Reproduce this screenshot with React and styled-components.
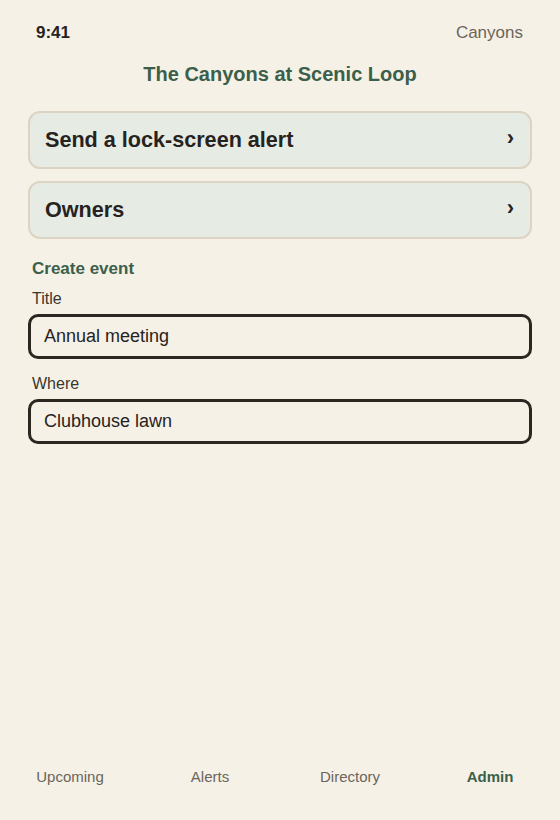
import React from "react";
import styled, { createGlobalStyle } from "styled-components";

const GlobalStyle = createGlobalStyle`
  html, body {
    margin: 0;
    padding: 0;
    background: #f6f1e6;
  }
  * {
    box-sizing: border-box;
  }
`;

const App = () => {
  return (
    <Screen>
      <GlobalStyle />
      <StatusBar>
        <Time>9:41</Time>
        <Carrier>Canyons</Carrier>
      </StatusBar>
      <Heading>The Canyons at Scenic Loop</Heading>

      <Content>
        <LinkCard type="button">
          <span>Send a lock-screen alert</span>
          <Chevron>›</Chevron>
        </LinkCard>
        <LinkCard type="button">
          <span>Owners</span>
          <Chevron>›</Chevron>
        </LinkCard>

        <Form>
          <SectionTitle>Create event</SectionTitle>
          <Field>
            <Label htmlFor="title">Title</Label>
            <Input id="title" defaultValue="Annual meeting" />
          </Field>
          <Field>
            <Label htmlFor="where">Where</Label>
            <Input id="where" defaultValue="Clubhouse lawn" />
          </Field>
        </Form>
      </Content>

      <TabBar>
        <Tab>Upcoming</Tab>
        <Tab>Alerts</Tab>
        <Tab>Directory</Tab>
        <Tab active>Admin</Tab>
      </TabBar>
    </Screen>
  );
};

const Screen = styled.div`
  min-height: 820px;
  display: flex;
  flex-direction: column;
  background: #f6f1e6;
  font-family: "Liberation Sans", Arial, sans-serif;
  color: #26231f;
`;

const StatusBar = styled.div`
  display: flex;
  justify-content: space-between;
  align-items: center;
  padding: 22px 37px 0 36px;
  height: 44px;
  line-height: 22px;
`;

const Time = styled.span`
  font-size: 17px;
  font-weight: 700;
  color: #26231f;
`;

const Carrier = styled.span`
  font-size: 17px;
  color: #6b655b;
`;

const Heading = styled.h1`
  margin: 17px 0 0;
  text-align: center;
  font-size: 20px;
  line-height: 26px;
  font-weight: 700;
  color: #3b5f4b;
`;

const Content = styled.main`
  flex: 1;
  display: flex;
  flex-direction: column;
  gap: 12px;
  padding: 24px 28px 0;
`;

const LinkCard = styled.button`
  display: flex;
  justify-content: space-between;
  align-items: center;
  width: 100%;
  height: 58px;
  padding: 0 16px 0 15px;
  background: #e6ebe4;
  border: 2px solid #dcd3c2;
  border-radius: 12px;
  font-family: inherit;
  font-size: 21.6px;
  font-weight: 700;
  color: #26231f;
  text-align: left;
  cursor: pointer;
`;

const Chevron = styled.span`
  font-size: 22px;
  font-weight: 700;
  line-height: 1;
  margin-top: -5px;
`;

const Form = styled.section`
  display: flex;
  flex-direction: column;
  gap: 15px;
  padding: 7px 0 0;
`;

const SectionTitle = styled.h2`
  margin: 0 0 -6px 4px;
  font-size: 17px;
  line-height: 22px;
  font-weight: 700;
  color: #3b5f4b;
`;

const Field = styled.div`
  display: flex;
  flex-direction: column;
  gap: 5px;
`;

const Label = styled.label`
  margin-left: 4px;
  font-size: 16px;
  line-height: 20px;
  color: #3a362f;
`;

const Input = styled.input`
  width: 100%;
  height: 45px;
  padding: 0 13px;
  background: #f6f1e6;
  border: 3px solid #2a2620;
  border-radius: 10px;
  font-family: inherit;
  font-size: 18px;
  color: #26231f;
  outline: none;
`;

const TabBar = styled.nav`
  display: grid;
  grid-template-columns: repeat(4, 1fr);
  padding: 0 0 32px;
`;

const Tab = styled.span`
  text-align: center;
  font-size: 15px;
  line-height: 22px;
  font-weight: ${(props) => (props.active ? 700 : 400)};
  color: ${(props) => (props.active ? "#3b5f4b" : "#6b655b")};
`;

export default App;
